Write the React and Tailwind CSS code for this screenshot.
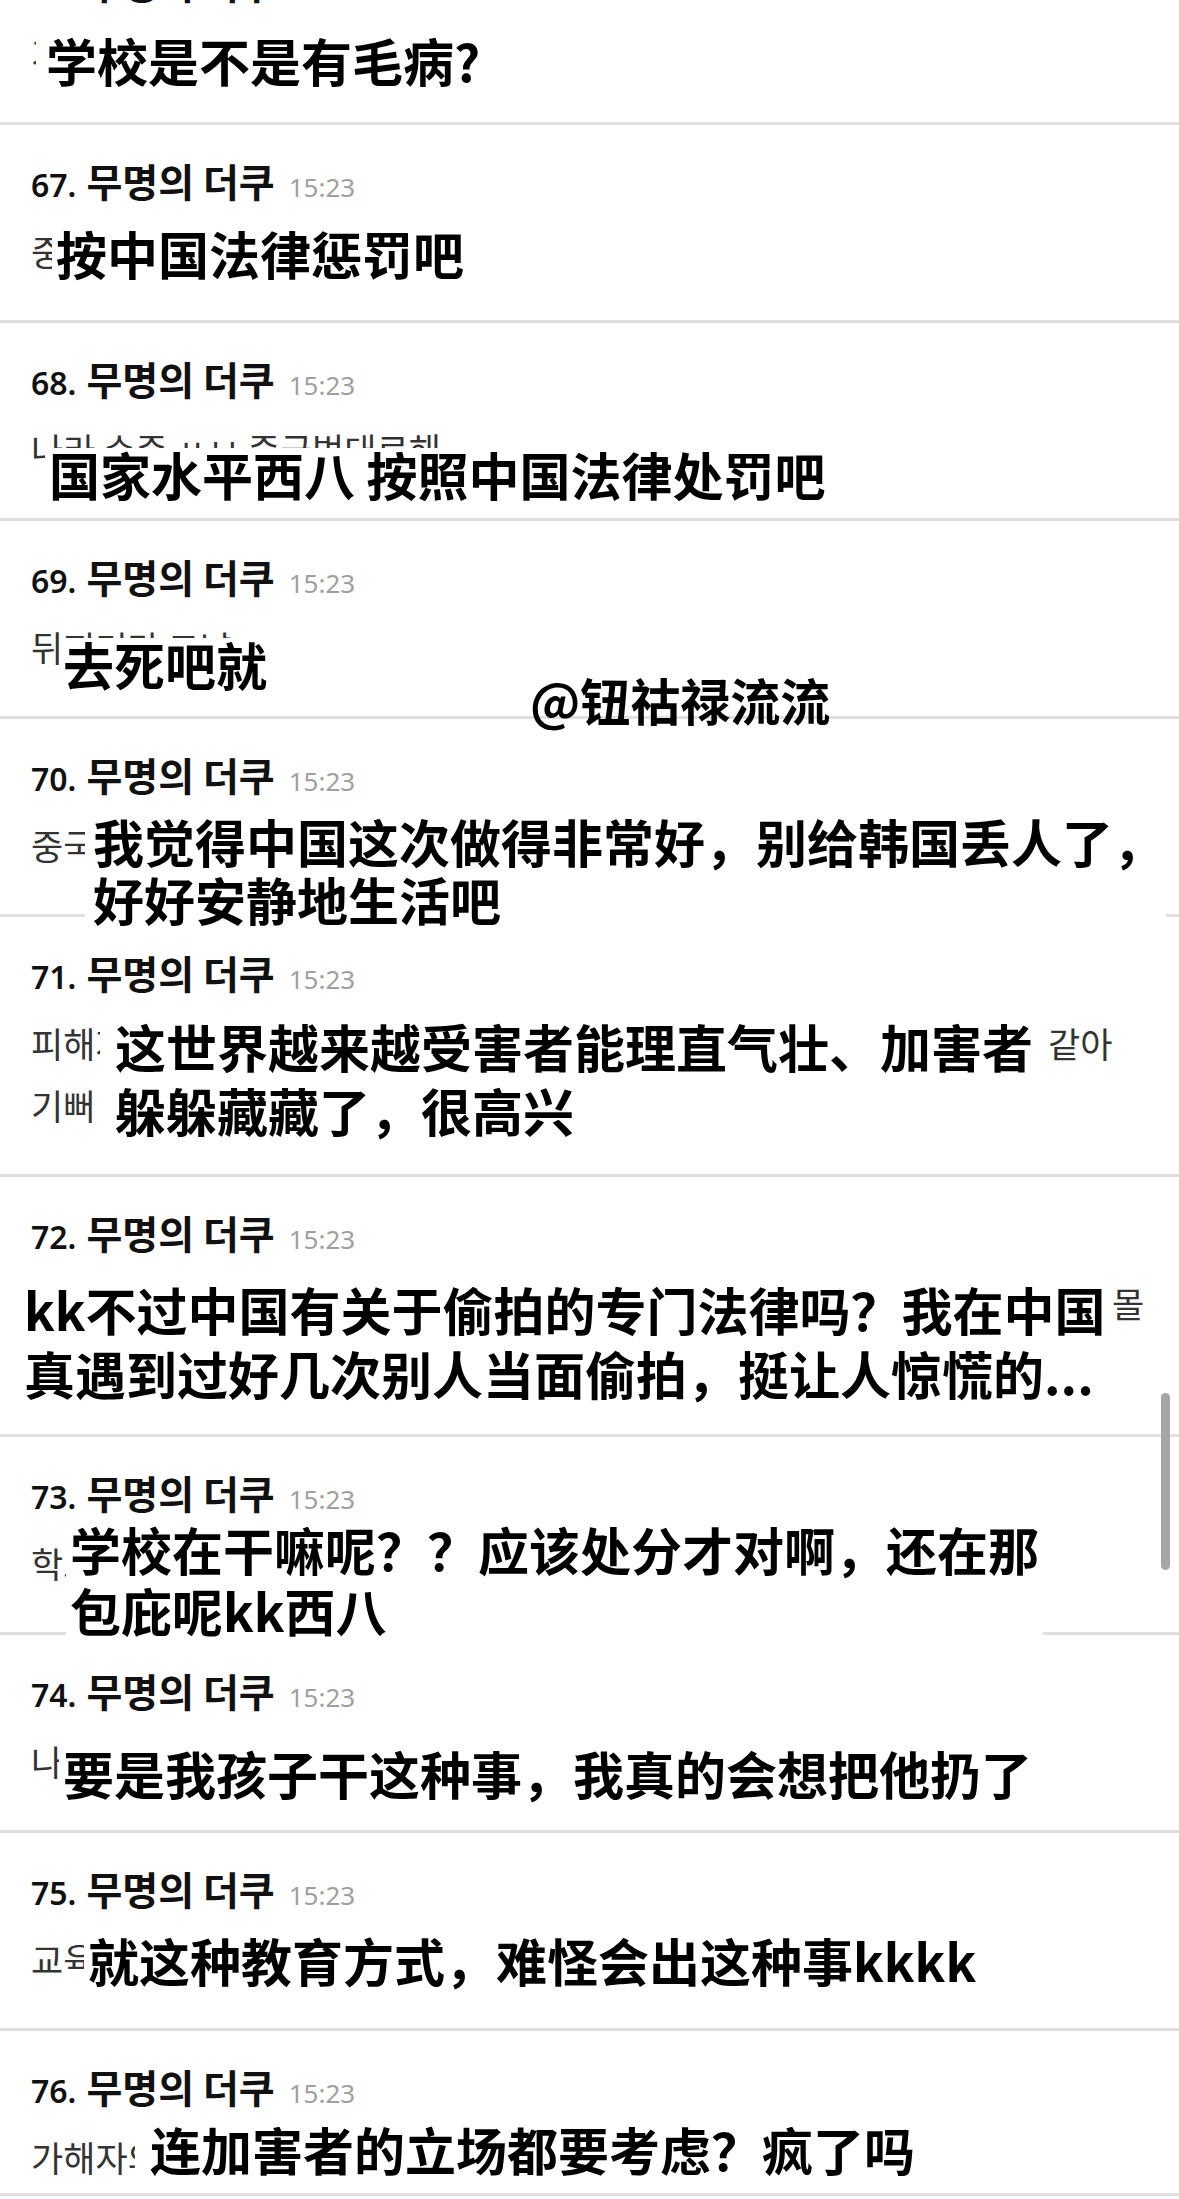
const KO = "font-['Noto_Sans_CJK_KR','Noto_Sans',sans-serif]";
const NUM = "font-['Noto_Sans','Noto_Sans_CJK_KR',sans-serif]";
const ZH = "font-['Noto_Sans_CJK_SC',sans-serif]";

const items = [
  {
    n: 66,
    ko: ["가해자 학교 제정신이야?"],
    zh: ["学校是不是有毛病?"],
    box: "left-[36px] top-[107px] leading-[52px] pl-[10px] pr-[4px]",
  },
  {
    n: 67,
    ko: ["중국법대로 처벌해라"],
    zh: ["按中国法律惩罚吧"],
    box: "left-[52px] top-[102px] leading-[52px] px-[4px]",
  },
  {
    n: 68,
    ko: ["나라 수준 ㅆㅂ 중국법대로해"],
    zh: ["国家水平西八 按照中国法律处罚吧"],
    box: "left-[45px] top-[125px] leading-[52px] px-[4px]",
  },
  {
    n: 69,
    ko: ["뒤지거라 그냥"],
    zh: ["去死吧就"],
    box: "left-[59px] top-[117px] leading-[52px] px-[4px]",
  },
  {
    n: 70,
    ko: ["중국이 이번에 진짜 잘했다 한국 망신 시키지 말고 조용히 살아라"],
    zh: ["我觉得中国这次做得非常好，别给韩国丢人了，", "好好安静地生活吧"],
    box: "left-[85px] top-[93px] leading-[58px] pl-[8px] pr-[2px]",
  },
  {
    n: 71,
    ko: [
      { a: "피해자가 당당하고 가해자가 숨는 세상이 되어 가는 것", w: "w-[1017px]", b: "같아" },
      "기뻐",
    ],
    zh: ["这世界越来越受害者能理直气壮、加害者", "躲躲藏藏了，很高兴"],
    box: "left-[100px] top-[97px] leading-[64px] pl-[15px] pr-[2px]",
  },
  {
    n: 72,
    ko: [
      { a: "ㅋㅋ근데 중국에 몰카 관련된 법이 따로 있어? 나 중국에서 진짜", w: "w-[1081px]", b: "몰" },
      "카 여러 번 당해봤는데 진짜 당황스러웠어...",
    ],
    zh: ["kk不过中国有关于偷拍的专门法律吗？我在中国", "真遇到过好几次别人当面偷拍，挺让人惊慌的..."],
    box: "left-[20px] top-[100px] leading-[64px] pl-[4px] pr-0",
  },
  {
    n: 73,
    ko: ["학교는 뭐하냐?? 처벌해야지 아직도 감싸고 있네 ㅋㅋ 시발"],
    zh: ["学校在干嘛呢？？应该处分才对啊，还在那", "包庇呢kk西八"],
    box: "left-[66px] top-[82px] leading-[61px] px-[4px]",
  },
  {
    n: 74,
    ko: ["나 같으면 내 자식이 이런 짓 하면 진짜 버릴 것 같아"],
    zh: ["要是我孩子干这种事，我真的会想把他扔了"],
    box: "left-[59px] top-[108px] leading-[60px] px-[4px]",
  },
  {
    n: 75,
    ko: ["교육을 이렇게 하니까 이런 일이 생기지 ㅋㅋㅋㅋ"],
    zh: ["就这种教育方式，难怪会出这种事kkkk"],
    box: "left-[84px] top-[101px] leading-[52px] px-[4px]",
  },
  {
    n: 76,
    ko: ["가해자의 입장까지 고려해야 돼? 미쳤냐"],
    zh: ["连加害者的立场都要考虑？疯了吗"],
    box: "left-[135px] top-[92px] leading-[52px] pl-[15px] pr-[4px]",
    last: true,
  },
];

function KoLine({ line }) {
  if (typeof line === "string") {
    return <div className="h-[62px] leading-[62px] whitespace-nowrap overflow-hidden">{line}</div>;
  }
  return (
    <div className="h-[62px] leading-[62px] whitespace-nowrap overflow-hidden">
      <span className={`inline-block overflow-hidden align-top ${line.w}`}>{line.a}</span>
      <span>{line.b}</span>
    </div>
  );
}

function Comment({ item }) {
  return (
    <div
      className={`relative border-t-[3px] border-[#e0e0e0] pt-[33px] px-[31px] ${
        item.last ? "pb-[5px] border-b-[3px]" : "pb-[38px]"
      }`}
    >
      <div className="h-[44px] leading-[44px] flex items-baseline whitespace-nowrap text-[#111]">
        <span className={`text-[32px] font-semibold ${NUM}`}>{item.n}.</span>
        <span className={`ml-[10px] text-[39px] font-semibold ${KO}`}>무명의 더쿠</span>
        <span className={`ml-[14px] text-[26px] text-[#a0a0a0] ${NUM}`}>15:23</span>
      </div>
      <div className={`mt-[18px] text-[35px] text-[#333] ${KO}`}>
        {item.ko.map((line, i) => (
          <KoLine key={i} line={line} />
        ))}
      </div>
      <div
        className={`absolute z-10 bg-white text-[51px] font-bold text-black whitespace-nowrap ${ZH} ${item.box}`}
      >
        {item.zh.map((t, i) => (
          <div key={i}>{t}</div>
        ))}
      </div>
    </div>
  );
}

export default function App() {
  return (
    <div className="relative w-[1179px] h-[2199px] overflow-hidden bg-white">
      <div className="-mt-[76px]">
        {items.map((item) => (
          <Comment key={item.n} item={item} />
        ))}
      </div>

      {/* watermark */}
      <div
        className={`absolute z-20 left-[530px] top-[669px] leading-[60px] text-[50px] font-bold text-black whitespace-nowrap ${ZH}`}
      >
        @钮祜禄流流
      </div>

      {/* scrollbar */}
      <div className="absolute z-20 left-[1161px] top-[1393px] w-[9px] h-[177px] rounded-full bg-[#a6a6a6]" />
    </div>
  );
}
